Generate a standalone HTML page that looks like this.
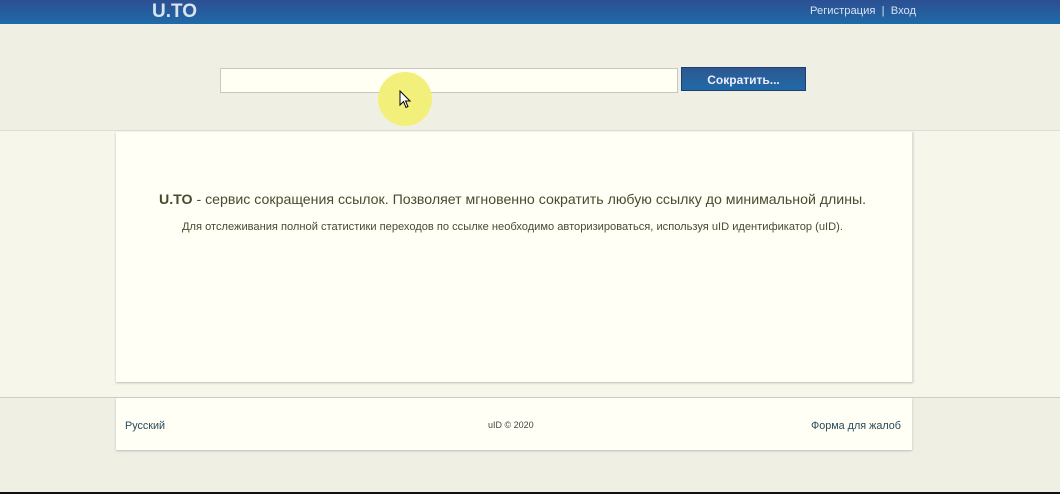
<!DOCTYPE html>
<html><head><meta charset="utf-8"><style>
body{margin:0;width:1060px;height:494px;overflow:hidden;background:#efefe3;font-family:"Liberation Sans","DejaVu Sans",sans-serif;position:relative}
.hdr{position:absolute;left:0;top:0;width:1060px;height:24px;background:linear-gradient(#2c4f92,#1f6aa8)}
.logo{position:absolute;left:152px;top:1px;color:#d8e4ee;font-weight:bold;font-size:19px}
.nav{position:absolute;left:810px;top:5px;color:#d8e2ee;font-size:11.2px}
.band{position:absolute;left:0;top:130px;width:1060px;height:266px;background:#f6f6ea;border-top:1px solid #ddd;border-bottom:1px solid #ccc}
.inp{position:absolute;left:220px;top:68px;width:456px;height:23px;background:#fffff4;border:1px solid #c8c8c0}
.btn{position:absolute;left:681px;top:67px;width:125px;height:24px;background:linear-gradient(#2e5890,#1f6aa8);border:1px solid #1c3f70;color:#eef;font-weight:bold;font-size:12px;text-align:center;line-height:24px;box-sizing:border-box}
.box{position:absolute;left:116px;top:132px;width:796px;height:250px;background:#fffff6;box-shadow:0 1px 2px #bbb;border-right:1px solid #ddd}
.foot{position:absolute;left:116px;top:398px;width:796px;height:52px;background:#fffff6;box-shadow:0 1px 2px #bbb}
.l1{position:absolute;left:159px;top:191px;font-size:14.15px;color:#4a4a30;white-space:nowrap}
.l2{position:absolute;left:182px;top:221px;font-size:11.1px;color:#4a4a30;white-space:nowrap}
.f{position:absolute;top:420px;font-size:10.8px;color:#2a4a5a}
.cur{position:absolute;left:378px;top:72px;width:54px;height:54px;border-radius:50%;background:#f2f07a}
.bot{position:absolute;left:0;top:492px;width:1060px;height:2px;background:#111}
</style></head><body>
<div class="hdr"><div class="logo">U.TO</div><div class="nav">Регистрация &nbsp;|&nbsp; Вход</div></div>
<div class="band"></div>
<div class="inp"></div>
<div class="cur"></div>
<svg style="position:absolute;left:399px;top:90px" width="14" height="20"><path d="M1 1 L1 15 L4.5 11.5 L7 17.5 L9 16.5 L6.5 11 L11 11 Z" fill="#fff" stroke="#000"/></svg>
<div class="btn">Сократить...</div>
<div class="box"></div>
<div class="l1"><b>U.TO</b> - сервис сокращения ссылок. Позволяет мгновенно сократить любую ссылку до минимальной длины.</div>
<div class="l2">Для отслеживания полной статистики переходов по ссылке необходимо авторизироваться, используя uID идентификатор (uID).</div>
<div class="foot"></div>
<div class="f" style="left:125px">Русский</div>
<div class="f" style="left:488px;font-size:9px;top:420px;color:#444">uID © 2020</div>
<div class="f" style="left:811px">Форма для жалоб</div>
<div class="bot"></div>
</body></html>
